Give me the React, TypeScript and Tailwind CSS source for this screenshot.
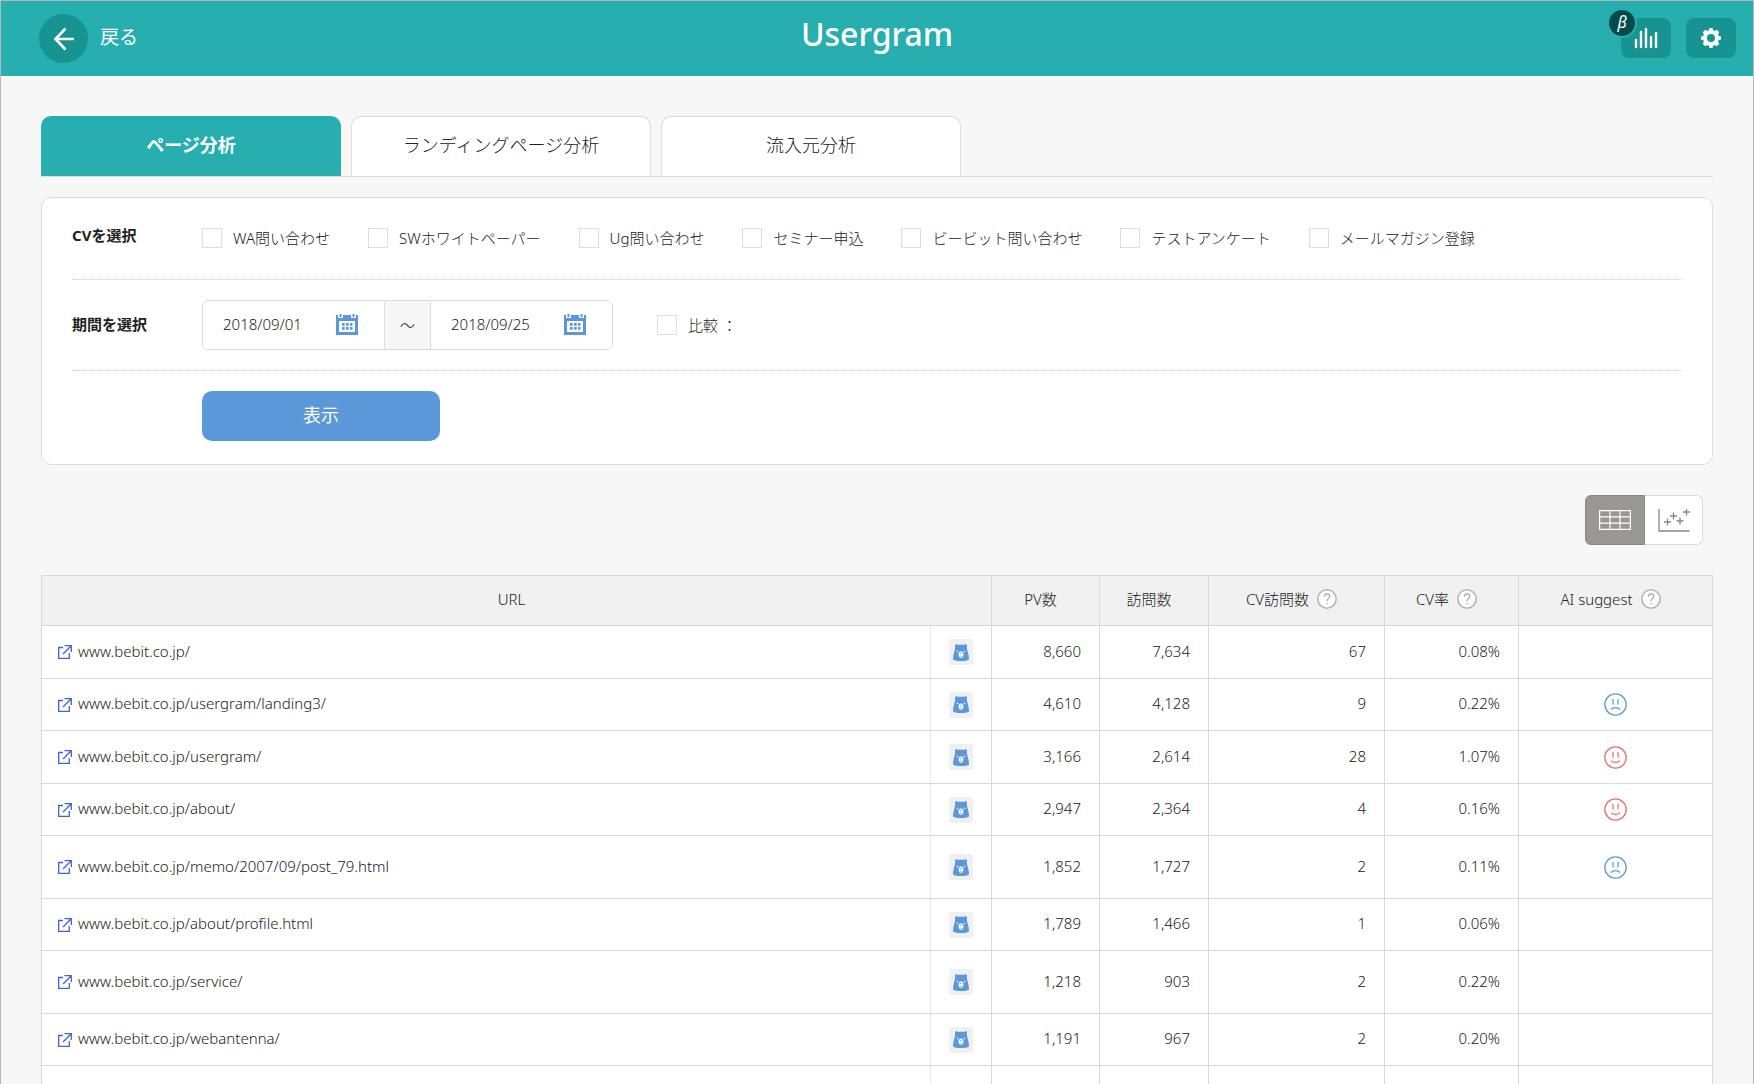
import { useState } from 'react';
import clsx from 'clsx';

type Mood = 'good' | 'bad' | null;

interface PageRow {
  url: string;
  pv: string;
  visits: string;
  cvVisits: string;
  cvRate: string;
  mood: Mood;
  tall?: boolean;
}

const TABS = ['ページ分析', 'ランディングページ分析', '流入元分析'];

const CONVERSIONS = [
  'WA問い合わせ',
  'SWホワイトペーパー',
  'Ug問い合わせ',
  'セミナー申込',
  'ビービット問い合わせ',
  'テストアンケート',
  'メールマガジン登録',
];

const ROWS: PageRow[] = [
  { url: 'www.bebit.co.jp/', pv: '8,660', visits: '7,634', cvVisits: '67', cvRate: '0.08%', mood: null },
  { url: 'www.bebit.co.jp/usergram/landing3/', pv: '4,610', visits: '4,128', cvVisits: '9', cvRate: '0.22%', mood: 'bad' },
  { url: 'www.bebit.co.jp/usergram/', pv: '3,166', visits: '2,614', cvVisits: '28', cvRate: '1.07%', mood: 'good' },
  { url: 'www.bebit.co.jp/about/', pv: '2,947', visits: '2,364', cvVisits: '4', cvRate: '0.16%', mood: 'good' },
  { url: 'www.bebit.co.jp/memo/2007/09/post_79.html', pv: '1,852', visits: '1,727', cvVisits: '2', cvRate: '0.11%', mood: 'bad', tall: true },
  { url: 'www.bebit.co.jp/about/profile.html', pv: '1,789', visits: '1,466', cvVisits: '1', cvRate: '0.06%', mood: null },
  { url: 'www.bebit.co.jp/service/', pv: '1,218', visits: '903', cvVisits: '2', cvRate: '0.22%', mood: null, tall: true },
  { url: 'www.bebit.co.jp/webantenna/', pv: '1,191', visits: '967', cvVisits: '2', cvRate: '0.20%', mood: null },
];

function BackIcon() {
  return (
    <svg width="22" height="24" viewBox="0 0 22 24" fill="none" stroke="#fff" strokeWidth="2.6" aria-hidden="true">
      <path d="M12.5 1.5 2.5 12l10 10.5M2.5 12H21" />
    </svg>
  );
}

function BarsIcon() {
  return (
    <svg width="24" height="22" viewBox="0 0 24 22" fill="none" stroke="#fff" strokeWidth="2.4" strokeLinecap="round" aria-hidden="true">
      <path d="M2 13v7M7 5v15M12 2v18M17 10v10M22 6v14" />
    </svg>
  );
}

function GearIcon() {
  return (
    <svg width="20" height="20" viewBox="0 0 20 20" fill="#fff" aria-hidden="true">
      <path
        fillRule="evenodd"
        d="M8.5 0h3l.6 2.3 1.5.6 2.1-1.2 2.6 2.6-1.2 2.1.6 1.5 2.3.6v3l-2.3.6-.6 1.5 1.2 2.1-2.6 2.6-2.1-1.2-1.5.6-.6 2.3h-3l-.6-2.3-1.5-.6-2.1 1.2-2.6-2.6 1.2-2.1-.6-1.5L0 11.5v-3l2.3-.6.6-1.5-1.2-2.1 2.6-2.6 2.1 1.2 1.5-.6zM10 6a4 4 0 1 0 0 8 4 4 0 0 0 0-8z"
      />
    </svg>
  );
}

function CalendarIcon() {
  return (
    <svg width="22" height="22" viewBox="0 0 22 22" fill="#5b98da" aria-hidden="true">
      <path fillRule="evenodd" d="M0 1h2v3h5V1h8v3h5V1h2v20H0zM3 7v11h16V7z" />
      <path d="M3.500 0h2v3h-2zM16.500 0h2v3h-2z" />
      <path d="M6 9h2.700v2.700H6zM10 9h2.700v2.700H10zM14 9h2.500v2.700H14zM6 13h2.700v2.700H6zM10 13h2.700v2.700H10zM14 13h2.500v2.700H14z" />
    </svg>
  );
}

function GridIcon() {
  return (
    <svg width="32" height="20" viewBox="0 0 32 20" fill="none" stroke="#fff" strokeWidth="1.2" aria-hidden="true">
      <path d="M.6.6h30.800v18.800H.6zM11 .6v18.800M21 .6v18.800M.6 6.800h30.800M.6 13.200h30.800" />
    </svg>
  );
}

function ScatterIcon() {
  return (
    <svg width="32" height="23" viewBox="0 0 32 23" fill="none" stroke="#8b8785" strokeWidth="1.300" aria-hidden="true">
      <path d="M1 0v22h30.500" />
      <path d="M6 13h7M9.500 9.500v7M12 7h7M15.500 3.500v7M18.500 12h7M22 8.500v7M25 3h7M28.500 0v6.500" />
    </svg>
  );
}

function ExternalIcon() {
  return (
    <svg className="shrink-0" width="14" height="14" viewBox="0 0 14 14" fill="none" stroke="#3f62dc" strokeWidth="1.300" aria-hidden="true">
      <path d="M5 2.500H.7v10.800h10.600V8M6.500.7h6.800V7M13 1 5 9" />
    </svg>
  );
}

function BearIcon() {
  return (
    <svg width="16" height="17" viewBox="0 0 16 17" aria-hidden="true">
      <path
        fill="#5b98da"
        d="M2 1.300C2.200 0 3.900-.1 4.700.8h6.600c.8-.9 2.500-.8 2.700.5.100.8-.3 1.300-.2 2.200.3 3.300 2.200 6.800 2.200 11.500 0 1.400-3.600 2-8 2s-8-.6-8-2C0 10.300 1.900 6.800 2.200 3.500c.1-.9-.3-1.400-.2-2.200z"
      />
      <circle cx="4.500" cy="7.500" r=".8" fill="#fff" />
      <circle cx="11.500" cy="7.500" r=".8" fill="#fff" />
      <ellipse cx="8" cy="10.600" rx="2.400" ry="3.100" fill="#fff" />
      <path fill="#5b98da" d="M7 9h2l-1 1.500zM6.800 11.800h2.400L8 13z" />
    </svg>
  );
}

function HelpButton({ label }: { label: string }) {
  return (
    <button type="button" aria-label={label}>
      <svg width="20" height="20" viewBox="0 0 20 20" fill="none" stroke="#b2b2b2" aria-hidden="true">
        <circle cx="10" cy="10" r="9.200" fill="#fff" strokeWidth="1.500" />
        <path d="M7.300 7.700C7.300 6 8.500 5 10 5s2.700 1 2.700 2.500c0 2-2.700 2.200-2.700 4.500" strokeWidth="1.400" />
        <circle cx="10" cy="14.400" r=".5" fill="#b2b2b2" strokeWidth=".8" />
      </svg>
    </button>
  );
}

function Face({ mood }: { mood: 'good' | 'bad' }) {
  return (
    <svg
      className="mx-auto"
      width="23"
      height="23"
      viewBox="0 0 23 23"
      fill="none"
      stroke={mood === 'good' ? '#e8706e' : '#5b9be0'}
      strokeWidth="1.300"
      role="img"
      aria-label={mood === 'good' ? 'good' : 'bad'}
    >
      <circle cx="11.500" cy="11.500" r="10.700" />
      <path d="M9 6v5.500M14 6v5.500" />
      <path d={mood === 'good' ? 'M7 14.600c2.200 2.500 6.800 2.500 9 0' : 'M7 16.500c2.200-2.500 6.800-2.500 9 0'} />
    </svg>
  );
}

function DateField({ id, label, value }: { id: string; label: string; value: string }) {
  return (
    <div className="flex w-[181px] items-center bg-white pr-[26px] pl-5">
      <input id={id} aria-label={label} type="text" defaultValue={value} className="w-full min-w-0 flex-1 bg-transparent pb-0.5 outline-none" />
      <button type="button" aria-label={`${label}カレンダー`}>
        <CalendarIcon />
      </button>
    </div>
  );
}

function CheckBox({ label }: { label: string }) {
  return (
    <label className="flex items-center gap-[11px]">
      <input type="checkbox" className="size-5 appearance-none border border-[#dedede] bg-white checked:bg-[#5b98da]" />
      {label}
    </label>
  );
}

export default function App() {
  const [tab, setTab] = useState(0);
  const [view, setView] = useState<'table' | 'chart'>('table');

  return (
    <div className="min-h-screen border border-[#b9b6b6] bg-[#f7f7f7] font-['Noto_Sans','Noto_Sans_CJK_JP',sans-serif] text-[15px] leading-5 font-light text-[#222]">
      <header className="grid h-[75px] grid-cols-[1fr_auto_1fr] items-center bg-[#27aeae] px-[17px] text-white">
        <button type="button" className="ml-[21px] flex items-center gap-3 justify-self-start text-[19px] font-normal">
          <span className="flex size-[49px] items-center justify-center rounded-full bg-[#179492]">
            <BackIcon />
          </span>
          <span className="pb-[3px]">戻る</span>
        </button>
        <h1 className="pb-2.5 text-[32px] leading-10 font-medium">Usergram</h1>
        <div className="flex gap-[15px] justify-self-end pb-px">
          <div className="relative">
            <button type="button" aria-label="レポート" className="flex h-10 w-[50px] items-center justify-center rounded-lg bg-[#179492]">
              <BarsIcon />
            </button>
            <span className="absolute -top-2 -left-3 flex size-[26px] items-center justify-center rounded-full bg-[#014b4a] pb-0.5 text-base font-normal italic ring-2 ring-[#27aeae]">
              β
            </span>
          </div>
          <button type="button" aria-label="設定" className="flex h-10 w-[50px] items-center justify-center rounded-lg bg-[#179492]">
            <GearIcon />
          </button>
        </div>
      </header>

      <main className="px-10 pt-10">
        <nav className="flex gap-2.5 border-b border-[#dbdbdb]">
          {TABS.map((name, i) => (
            <button
              key={name}
              type="button"
              onClick={() => setTab(i)}
              className={clsx(
                'h-[60px] w-[300px] rounded-t-[10px] pb-[3px] text-[18px]',
                i === tab ? 'bg-[#27aeae] font-bold text-white' : 'border border-b-0 border-[#dbdbdb] bg-white',
              )}
            >
              {name}
            </button>
          ))}
        </nav>

        {/* Search conditions */}
        <form className="mt-5 rounded-[10px] border border-[#dbdbdb] bg-white px-[30px] pb-[23px]" onSubmit={(e) => e.preventDefault()}>
          <div className="flex h-[82px] items-center border-b border-dotted border-[#ccc] pb-0.5">
            <span className="w-[130px] pb-1.5 font-bold">CVを選択</span>
            <div className="flex gap-[38px]">
              {CONVERSIONS.map((name) => (
                <CheckBox key={name} label={name} />
              ))}
            </div>
          </div>
          <div className="flex h-[91px] items-center border-b border-dotted border-[#ccc]">
            <span className="w-[130px] pb-0.5 font-bold">期間を選択</span>
            <div className="flex h-[50px] overflow-hidden rounded-md border border-[#dbdbdb]">
              <DateField id="date-from" label="開始日" value="2018/09/01" />
              <span className="flex w-[47px] items-center justify-center border-x border-[#dbdbdb] bg-[#f7f7f7]">～</span>
              <DateField id="date-to" label="終了日" value="2018/09/25" />
            </div>
            <div className="ml-11 flex">
              <CheckBox label="比較 ：" />
            </div>
          </div>
          <button type="submit" className="mt-5 ml-[130px] h-[50px] w-[238px] rounded-[10px] bg-[#5b98da] pb-[3px] text-[18px] font-normal text-white">
            表示
          </button>
        </form>

        {/* View switch */}
        <div className="mt-[30px] flex justify-end pr-2.5">
          <button
            type="button"
            aria-label="表"
            onClick={() => setView('table')}
            className={clsx(
              'flex h-[50px] w-[60px] items-center justify-center rounded-l-md border',
              view === 'table' ? 'border-[#8b8785] bg-[#9b9795]' : 'border-[#dbdbdb] bg-[#c4c1c0]',
            )}
          >
            <GridIcon />
          </button>
          <button
            type="button"
            aria-label="グラフ"
            onClick={() => setView('chart')}
            className="flex h-[50px] w-[58px] items-center justify-center rounded-r-md border border-l-0 border-[#dbdbdb] bg-white"
          >
            <ScatterIcon />
          </button>
        </div>

        <table className="mt-[30px] w-full table-fixed border-separate border-spacing-0 border-t border-l border-[#d8d8d8] bg-white [&_td]:border-b [&_td]:border-[#d8d8d8] [&_th]:border-r [&_th]:border-b [&_th]:border-[#d8d8d8] [&_th]:bg-[#f1f1f1] [&_th]:pr-2.5 [&_th]:pb-[3px] [&_th]:font-light">
          <colgroup>
            <col />
            <col className="w-[61px]" />
            <col className="w-[108px]" />
            <col className="w-[109px]" />
            <col className="w-[176px]" />
            <col className="w-[134px]" />
            <col className="w-[194px]" />
          </colgroup>
          <thead>
            <tr className="h-[50px]">
              <th colSpan={2}>URL</th>
              <th>PV数</th>
              <th>訪問数</th>
              {['CV訪問数', 'CV率', 'AI suggest'].map((name) => (
                <th key={name}>
                  <span className="flex items-center justify-center gap-2">
                    {name}
                    <HelpButton label={`${name}とは`} />
                  </span>
                </th>
              ))}
            </tr>
          </thead>
          <tbody>
            {ROWS.map((row) => (
              <tr key={row.url} className={row.tall ? 'h-[63px]' : 'odd:h-[53px] even:h-[52px]'}>
                <td className="border-r pl-4 [border-right-style:dotted]">
                  <a href={`http://${row.url}`} className="flex items-center gap-1.5">
                    <ExternalIcon />
                    <span className="pb-[3px]">{row.url}</span>
                  </a>
                </td>
                <td className="border-r">
                  <button type="button" aria-label="ユーザーを見る" className="mx-auto flex h-[26px] w-6 items-center justify-center rounded-xs bg-[#f0f0f0]">
                    <BearIcon />
                  </button>
                </td>
                <td className="border-r pr-[18px] pb-[3px] text-right">{row.pv}</td>
                <td className="border-r pr-[18px] pb-[3px] text-right">{row.visits}</td>
                <td className="border-r pr-[18px] pb-[3px] text-right">{row.cvVisits}</td>
                <td className="border-r pr-[18px] pb-[3px] text-right">{row.cvRate}</td>
                <td className="border-r">{row.mood && <Face mood={row.mood} />}</td>
              </tr>
            ))}
            <tr className="h-[18px]">
              <td className="border-r border-b-0! [border-right-style:dotted]" />
              {[0, 1, 2, 3, 4, 5].map((i) => (
                <td key={i} className="border-r border-b-0!" />
              ))}
            </tr>
          </tbody>
        </table>
      </main>
    </div>
  );
}
